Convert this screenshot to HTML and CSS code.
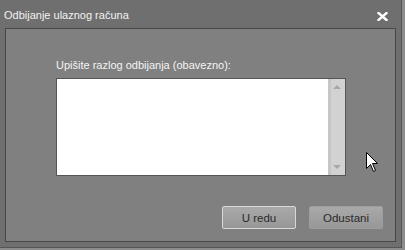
FILE: index.html
```html
<!DOCTYPE html>
<html lang="hr">
<head>
    <meta charset="UTF-8">
    <title>Odbijanje ulaznog računa</title>
    <link rel="stylesheet" href="styles.css">
</head>
<body>
    <div class="dialog">
        <div class="titlebar">
            <span class="title">Odbijanje ulaznog računa</span>
            <span class="close">
                <svg width="11" height="9" viewBox="0 0 11 9">
                    <path d="M1.5 1 L9.5 8 M9.5 1 L1.5 8" stroke="#ffffff" stroke-width="2.4" stroke-linecap="square"/>
                </svg>
            </span>
        </div>
        <div class="panel">
            <div class="form">
                <label class="label" for="reason">Upišite razlog odbijanja (obavezno):</label>
                <div class="memo">
                    <div class="memo-text" id="reason"></div>
                    <div class="scrollbar">
                        <span class="arrow up"></span>
                        <span class="arrow down"></span>
                    </div>
                </div>
            </div>
            <div class="actions">
                <button class="btn btn-default">U redu</button>
                <button class="btn">Odustani</button>
            </div>
        </div>
    </div>

    <svg class="cursor" width="13" height="21" viewBox="0 0 13 21">
        <path d="M0.5 0.5 L0.5 16.5 L4.5 12.5 L7.5 19.5 L9.5 18.5 L6.5 11.5 L11.5 11.5 Z" fill="#ffffff" stroke="#000000" stroke-width="1"/>
    </svg>
</body>
</html>
```

FILE: styles.css
```css
* {
    margin: 0;
    padding: 0;
    box-sizing: border-box;
}

body {
    width: 405px;
    height: 250px;
    background-color: #8c8c8c;
    font-family: Tahoma, "Liberation Sans", sans-serif;
    overflow: hidden;
    position: relative;
}

.dialog {
    width: 402px;
    height: 248px;
    background-color: #6f6f6f;
    border-right: 1px solid #555;
    border-bottom: 1px solid #555;
    padding: 0 5px 5px 5px;
    display: flex;
    flex-direction: column;
}

.titlebar {
    height: 28px;
    display: flex;
    align-items: center;
    justify-content: space-between;
    padding: 0 8px 0 0;
    margin-left: -1px;
}

.title {
    color: #f2f2f2;
    font-size: 11px;
    padding-top: 2px;
}

.close {
    display: flex;
    margin-top: 4px;
}

.panel {
    flex: 1;
    background-color: #808080;
    border: 1px solid #474747;
    display: flex;
    flex-direction: column;
    justify-content: space-between;
    padding: 29px 12px 12px 50px;
}

.label {
    display: block;
    color: #f4f4f4;
    font-size: 11px;
    line-height: 14px;
    margin-bottom: 6px;
}

.memo {
    width: 290px;
    height: 98px;
    border: 1px solid #555;
    background-color: #fff;
    display: flex;
}

.memo-text {
    flex: 1;
}

.scrollbar {
    width: 17px;
    background: linear-gradient(to right, #c6c6c6 0, #c6c6c6 3px, #d2d2d2 3px);
    display: flex;
    flex-direction: column;
    justify-content: space-between;
    align-items: center;
    padding: 6px 0 6px 0;
}

.arrow {
    width: 0;
    height: 0;
    border-left: 4px solid transparent;
    border-right: 4px solid transparent;
}

.arrow.up {
    border-bottom: 4px solid #a8a8a8;
}

.arrow.down {
    border-top: 4px solid #a8a8a8;
}

.actions {
    display: flex;
    justify-content: flex-end;
    gap: 13px;
}

.btn {
    width: 74px;
    height: 23px;
    border: 1px solid #9e9e9e;
    border-radius: 2px;
    background: linear-gradient(#a9a9a9, #979797);
    color: #2a2a2a;
    font-family: Tahoma, "Liberation Sans", sans-serif;
    font-size: 11.5px;
}

.btn-default {
    border-color: #d8d8d8;
}

.cursor {
    position: absolute;
    left: 366px;
    top: 152px;
}
```
